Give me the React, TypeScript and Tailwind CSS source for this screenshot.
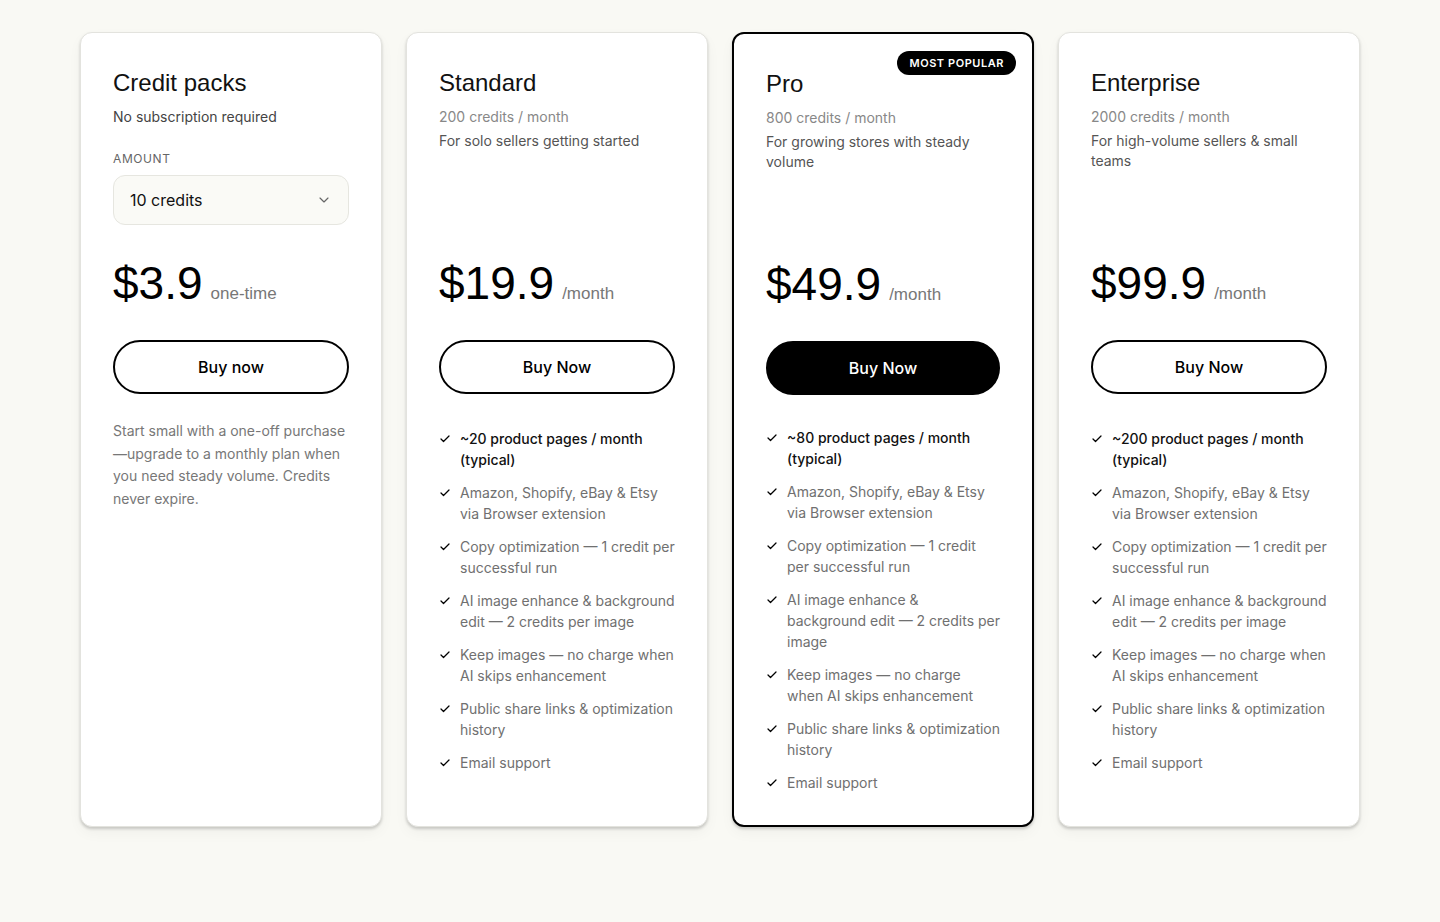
import React from 'react';
import { Check, ChevronDown } from 'lucide-react';

const HEAD = "font-['Liberation_Sans',Arial,sans-serif]";

interface Plan {
  name: string;
  credits: string;
  blurb: string;
  price: string;
  popular?: boolean;
  features: string[];
}

const plans: Plan[] = [
  {
    name: 'Standard',
    credits: '200 credits / month',
    blurb: 'For solo sellers getting started',
    price: '$19.9',
    features: [
      '~20 product pages / month (typical)',
      'Amazon, Shopify, eBay & Etsy via Browser extension',
      'Copy optimization — 1 credit per successful run',
      'AI image enhance & background edit — 2 credits per image',
      'Keep images — no charge when AI skips enhancement',
      'Public share links & optimization history',
      'Email support',
    ],
  },
  {
    name: 'Pro',
    credits: '800 credits / month',
    blurb: 'For growing stores with steady volume',
    price: '$49.9',
    popular: true,
    features: [
      '~80 product pages / month (typical)',
      'Amazon, Shopify, eBay & Etsy via Browser extension',
      'Copy optimization — 1 credit per successful run',
      'AI image enhance & background edit — 2 credits per image',
      'Keep images — no charge when AI skips enhancement',
      'Public share links & optimization history',
      'Email support',
    ],
  },
  {
    name: 'Enterprise',
    credits: '2000 credits / month',
    blurb: 'For high-volume sellers & small teams',
    price: '$99.9',
    features: [
      '~200 product pages / month (typical)',
      'Amazon, Shopify, eBay & Etsy via Browser extension',
      'Copy optimization — 1 credit per successful run',
      'AI image enhance & background edit — 2 credits per image',
      'Keep images — no charge when AI skips enhancement',
      'Public share links & optimization history',
      'Email support',
    ],
  },
];

function Price({ value, unit }: { value: string; unit: string }) {
  return (
    <div className={`mt-[33px] flex items-baseline gap-2 ${HEAD}`}>
      <span className="text-[46px] leading-none text-black">{value}</span>
      <span className="text-[17px] leading-none text-[#777]">{unit}</span>
    </div>
  );
}

function CreditPacks() {
  return (
    <div className="flex flex-col rounded-xl border border-[#e3e3de] bg-white p-8 shadow-[0_2px_3px_rgba(0,0,0,0.18),0_6px_14px_rgba(0,0,0,0.04)]">
      <div className="h-[162px]">
        <h2 className={`mt-0.5 text-2xl leading-8 text-[#111] ${HEAD}`}>Credit packs</h2>
        <p className="mt-2 text-sm leading-5 text-[#444]">No subscription required</p>
        <div className="mt-6 text-xs leading-4 uppercase tracking-wider text-[#666]">Amount</div>
        <button className="mt-2 flex h-[50px] w-full items-center justify-between rounded-xl border border-[#e6e6e0] bg-[#fafaf6] px-4 text-base text-[#111]">
          <span>10 credits</span>
          <ChevronDown className="h-4 w-4 text-[#666]" strokeWidth={1.75} />
        </button>
      </div>
      <Price value="$3.9" unit="one-time" />
      <button className="mt-[34px] h-[54px] w-full rounded-full border-2 border-black text-base font-medium text-black">
        Buy now
      </button>
      <p className="mt-[26px] text-sm leading-[22.5px] text-[#777]">
        Start small with a one-off purchase —upgrade to a monthly plan when you need steady volume. Credits never expire.
      </p>
    </div>
  );
}

function PlanCard({ plan }: { plan: Plan }) {
  return (
    <div
      className={
        plan.popular
          ? 'relative flex flex-col rounded-xl border-2 border-black bg-white p-8 shadow-[0_2px_3px_rgba(0,0,0,0.18),0_6px_14px_rgba(0,0,0,0.04)]'
          : 'relative flex flex-col rounded-xl border border-[#e3e3de] bg-white p-8 shadow-[0_2px_3px_rgba(0,0,0,0.18),0_6px_14px_rgba(0,0,0,0.04)]'
      }
    >
      {plan.popular && (
        <span className="absolute right-4 top-[17px] rounded-full bg-black px-3 py-[5px] text-[11px] font-semibold leading-[14px] tracking-wider text-white">
          MOST POPULAR
        </span>
      )}
      <div className="h-[162px]">
        <h2 className={`mt-0.5 text-2xl leading-8 text-[#111] ${HEAD}`}>{plan.name}</h2>
        <p className="mt-2 text-sm leading-5 text-[#888]">{plan.credits}</p>
        <p className="mt-1 text-sm leading-5 text-[#555]">{plan.blurb}</p>
      </div>
      <Price value={plan.price} unit="/month" />
      <button
        className={
          plan.popular
            ? 'mt-[34px] h-[54px] w-full rounded-full border-2 border-black bg-black text-base font-medium text-white'
            : 'mt-[34px] h-[54px] w-full rounded-full border-2 border-black bg-white text-base font-medium text-black'
        }
      >
        Buy Now
      </button>
      <ul className={plan.popular ? 'mt-8 space-y-3' : 'mt-[34px] space-y-3'}>
        {plan.features.map((f, i) => (
          <li key={f} className="flex items-start gap-[9px] text-sm leading-[21px]">
            <Check className="mt-[5px] h-3 w-3 shrink-0 text-black" strokeWidth={2.5} />
            <span className={i === 0 ? 'font-medium text-[#111]' : 'text-[#707070]'}>{f}</span>
          </li>
        ))}
      </ul>
    </div>
  );
}

export default function App() {
  return (
    <div className="min-h-screen bg-[#f9f9f4] px-20 pt-8 font-['Inter',sans-serif]">
      <div className="grid grid-cols-4 gap-6">
        <CreditPacks />
        {plans.map((p) => (
          <PlanCard key={p.name} plan={p} />
        ))}
      </div>
    </div>
  );
}
